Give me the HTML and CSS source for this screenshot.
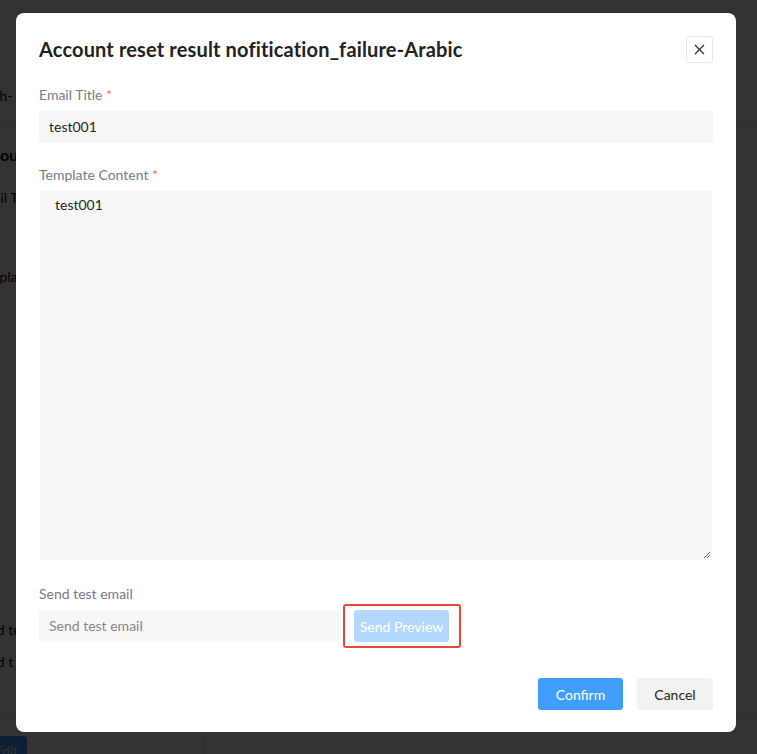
FILE: index.html
```html
<!DOCTYPE html>
<html>
<head>
<meta charset="utf-8">
<link rel="stylesheet" href="styles.css">
</head>
<body>
<div class="page">
  <div class="bg-row r1">Fresh-</div>
  <div class="bg-line l1"></div>
  <div class="bg-row r2 bold">Account</div>
  <div class="bg-row r3">Email Title</div>
  <div class="bg-row r4">Template</div>
  <div class="bg-row r5">Send test</div>
  <div class="bg-row r6">Send t</div>
  <div class="bg-line l2"></div>
  <div class="bg-foot"><span class="bg-btn">Edit</span><span class="bg-vline"></span></div>
</div>
<div class="overlay"></div>
<div class="modal">
  <div class="modal-head">
    <h1 class="title">Account reset result nofitication_failure-Arabic</h1>
    <button class="close" aria-label="close">
      <svg width="11" height="11" viewBox="0 0 11 11"><path d="M1 1L10 10M10 1L1 10" stroke="#333" stroke-width="1.3" fill="none"/></svg>
    </button>
  </div>
  <div class="field first">
    <div class="label">Email Title <span class="req">*</span></div>
    <div class="input">test001</div>
  </div>
  <div class="field second">
    <div class="label">Template Content <span class="req">*</span></div>
    <div class="textarea">test001
      <svg class="grip" width="8" height="8" viewBox="0 0 8 8"><path d="M7 1L1 7M7 4L4 7" stroke="#666" stroke-width="1" fill="none"/></svg>
    </div>
  </div>
  <div class="field test">
    <div class="label">Send test email</div>
    <div class="test-row">
      <div class="input short placeholder">Send test email</div>
      <div class="highlight"><button class="btn preview">Send Preview</button></div>
    </div>
  </div>
  <div class="footer">
    <button class="btn confirm">Confirm</button>
    <button class="btn cancel">Cancel</button>
  </div>
</div>
</body>
</html>
```
FILE: styles.css
```css
* { box-sizing: border-box; }
html, body { margin: 0; padding: 0; }
body {
  width: 757px; height: 754px; overflow: hidden;
  background: #fff;
  font-family: Lato, "Noto Sans", sans-serif;
  position: relative;
}
.page { padding-top: 86px; margin-left: -26px; color: #000; font-size: 14px; }
.bg-row { height: 20px; line-height: 20px; }
.bold { font-weight: 700; font-size: 16px; }
.bg-line { height: 1px; background: #e0e0e0; width: 900px; }
.l1 { margin-top: 17px; }
.r2 { margin-top: 21px; }
.r3 { margin-top: 23px; }
.r4 { margin-top: 59px; }
.r5 { margin-top: 333px; }
.r6 { margin-top: 12px; }
.l2 { margin-top: 42px; }
.bg-foot { display: flex; margin-top: 21px; margin-left: 12px; }
.bg-btn { background: #409eff; color: #fff; width: 41px; height: 30px; line-height: 30px; border-radius: 4px; text-align: center; font-size: 13px; }
.bg-vline { width: 1px; height: 30px; background: #ccc; margin-left: 176px; }

.overlay { position: fixed; inset: 0; background: rgba(0,0,0,0.8); }
.modal {
  position: fixed; left: 16px; top: 13px; width: 720px; height: 719px;
  background: #fff; border-radius: 8px;
  padding: 23px 23px 0 23px;
  display: flex; flex-direction: column;
}
.modal-head { display: flex; justify-content: space-between; align-items: center; height: 27px; }
.title { margin: 0; font-size: 20px; font-weight: 700; color: #222; line-height: 27px; letter-spacing: 0.15px; }
.close {
  width: 27px; height: 27px; border: 1px solid #e6e6e6; border-radius: 3px; background: #fff;
  display: flex; align-items: center; justify-content: center; padding: 0;
}
.field { display: flex; flex-direction: column; }
.first { margin-top: 22px; }
.second { margin-top: 22px; }
.label { font-size: 14px; line-height: 20px; color: #7a7a8c; height: 20px; margin-bottom: 6px; }
.req { color: #f56c6c; }
.input {
  height: 32px; line-height: 32px; background: #f7f7f7; border-radius: 3px;
  padding-left: 10px; font-size: 14px; color: #262626;
}
.textarea {
  position: relative; margin: 0 1px;
  height: 369px; background: #f7f7f7; border-radius: 2px;
  padding: 3px 15px; font-size: 14px; line-height: 22px; color: #262626;
}
.grip { position: absolute; right: 1px; bottom: 1px; }
.test { margin-top: 24px; }
.test-row { display: flex; align-items: center; }
.short { width: 300px; }
.placeholder { color: #888; }
.highlight {
  margin: -6px 0 -6px 4px; padding: 4px 10px 4px 9px;
  border: 2px solid #e8473b; border-radius: 3px;
}
.btn { border: 0; font-family: inherit; font-size: 14px; height: 32px; border-radius: 3px; padding: 0; }
.preview { background: #b3d8ff; color: #fff; width: 95px; display: block; }
.footer { display: flex; justify-content: flex-end; gap: 14px; margin-top: 36px; }
.confirm { background: #409eff; color: #fff; width: 85px; }
.cancel { background: #f2f2f2; color: #262626; width: 76px; }
```
